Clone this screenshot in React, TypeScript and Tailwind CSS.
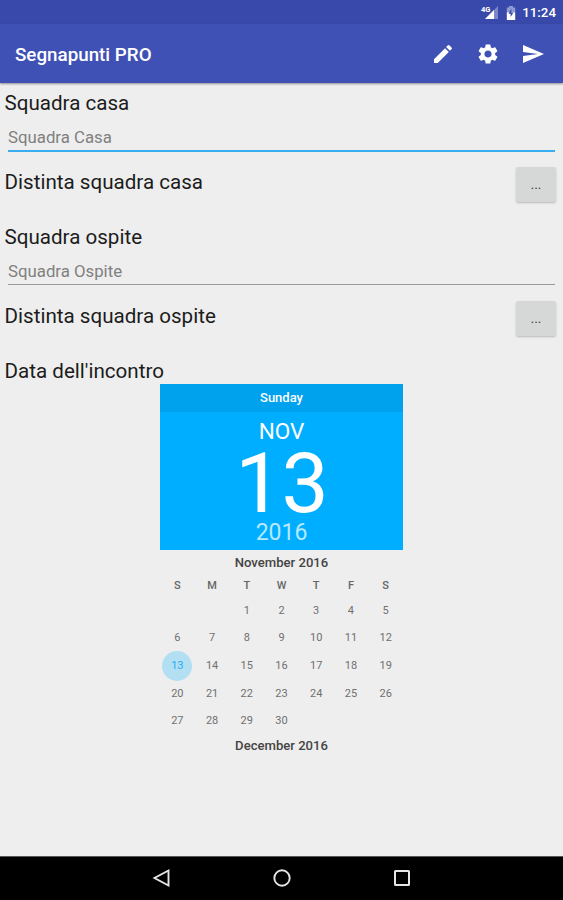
import { useState } from "react";
import { MdEdit, MdSend, MdSettings } from "react-icons/md";

type teamFieldProps = {
	label: string,
	placeholder: string,
	listLabel: string,
	active: boolean,
	onFocus: () => void,
}

const weekDays = ["Sunday", "Monday", "Tuesday", "Wednesday", "Thursday", "Friday", "Saturday"];

// november 2016 starts on a tuesday
const firstDay = 2;
const daysInMonth = 30;

function StatusBar() {
	return (
	<div className="flex h-6 items-center justify-end bg-[#3949ab] pr-[7px] text-white">
		<svg className="mt-px h-[15px] w-[18px]" viewBox="0 0 18 15">
			<path d="M17 1v13H4z" fill="#fff" fillOpacity="0.35" />
			<path d="M13 5v9H4z" fill="#fff" />
			<text x="0" y="6.6" fontSize="7.5" fontWeight="700" fill="#fff" fontFamily="Roboto, sans-serif">4G</text>
		</svg>
		<svg className="mr-1.5 ml-[7px] mt-px h-[14px] w-[10px]" viewBox="0 0 10 14">
			<path d="M3 0h4v1.5h2.2V7H.8V1.5H3z" fill="#fff" fillOpacity="0.45" />
			<path d="M.8 6.5h8.4V14H.8z" fill="#fff" />
			<path d="M5.4 2.5v4.2h2L4.6 11V7.8h-2z" fill="#3949ab" />
		</svg>
		<span className="mt-0.5 text-[13.3px] leading-none font-medium">11:24</span>
	</div>
	);
}

function Toolbar() {
	return (
	<header className="relative flex h-[59px] items-center justify-between bg-[#3f51b5] pt-0.5 pr-[18px] pl-[15px] text-white shadow-[0_1px_2px_rgba(0,0,0,0.4)]">
		<h1 className="pt-px text-[18.8px] leading-6 font-medium">Segnapunti PRO</h1>
		<div className="flex gap-[21px] pb-0.5">
			<button type="button" aria-label="Modifica"><MdEdit size={24} /></button>
			<button type="button" aria-label="Impostazioni"><MdSettings size={24} /></button>
			<button type="button" aria-label="Invia"><MdSend size={24} /></button>
		</div>
	</header>
	);
}

function TeamField({ label, placeholder, listLabel, active, onFocus }: teamFieldProps) {
	return (
	<section className="h-[134px]">
		<h2 className="pl-[4.5px] text-[20.6px] leading-[26px] text-[#1c1c1c]">{label}</h2>
		<div className={active ? "mx-2 mt-2 mb-[15px] border-b-2 border-[#38aef0]" : "mx-2 mt-2 mb-4 border-b border-[#9a9a9a]"}>
			<input
				type="text"
				placeholder={placeholder}
				onFocus={onFocus}
				className="block h-[26px] w-full bg-transparent pb-px text-[16.8px] text-[#333] outline-none placeholder:text-[#808080]"
			/>
		</div>
		<div className="flex h-[35px] justify-between pr-[7px] pl-[4.5px]">
			<h2 className="pt-0.5 text-[20.6px] leading-[26px] text-[#1c1c1c]">{listLabel}</h2>
			<button type="button" className="h-[35px] w-10 rounded-[2px] bg-[#d6d7d7] text-[14px] text-[#444] shadow-[0_1px_2px_rgba(0,0,0,0.22)]">...</button>
		</div>
	</section>
	);
}

function Calendar() {
	const [selected, setSelected] = useState(13);

	const cells: (number | null)[] = [
		...Array(firstDay).fill(null),
		...Array.from({ length: daysInMonth }, (_, i) => i + 1),
	];

	return (
	<div className="mx-auto w-[243px]">
		<div className="flex h-[166px] flex-col items-center bg-[#00aeff] text-white">
			<div className="h-7 w-full bg-[#00a2ee] text-center text-[13px] leading-[28px] font-medium">
				{weekDays[(selected + firstDay - 1) % 7]}
			</div>
			<p className="mt-1.5 text-[22.5px] leading-[26px]">NOV</p>
			<p className="pt-0.5 text-[84px] leading-[75px] tracking-[-1px]">{selected}</p>
			<p className="text-[23px] leading-[24px] text-[#b8e8ff]">2016</p>
		</div>
		<p className="h-[25px] text-center text-[13.1px] leading-[26px] font-medium text-[#444]">November 2016</p>
		<div className="grid h-[22px] grid-cols-7 text-center text-[11px] leading-[22px] font-medium text-[#666]">
			{weekDays.map((day) => <span key={day}>{day[0]}</span>)}
		</div>
		<div className="grid auto-rows-[27.7px] grid-cols-7 text-[11px] text-[#707070]">
			{cells.map((day, i) => (
				<div key={i} className="flex items-center justify-center">
					{
						day && (
							<button
								type="button"
								onClick={() => setSelected(day)}
								className={day === selected
									? "-my-1 h-[30px] w-[30px] shrink-0 rounded-full bg-[#b2dff1] text-[#27adf5]"
									: "h-6 w-6"}
							>
								{day}
							</button>
						)
					}
				</div>
			))}
		</div>
		<p className="text-center text-[13.1px] leading-[22px] font-medium text-[#444]">December 2016</p>
	</div>
	);
}

function NavigationBar() {
	return (
	<nav className="flex h-11 items-center justify-center gap-24 border-t border-[#555] bg-black pb-0.5">
		<svg className="h-6 w-6" viewBox="0 0 24 24" fill="none" stroke="#e6e6e6" strokeWidth="1.9">
			<path d="M18.5 4.5v15L4.5 12z" />
		</svg>
		<svg className="h-6 w-6" viewBox="0 0 24 24" fill="none" stroke="#e6e6e6" strokeWidth="1.9">
			<circle cx="12" cy="12" r="7.7" />
		</svg>
		<svg className="h-6 w-6" viewBox="0 0 24 24" fill="none" stroke="#e6e6e6" strokeWidth="2">
			<rect x="5" y="5" width="14" height="14" rx="0.5" />
		</svg>
	</nav>
	);
}

export default function App() {
	const [active, setActive] = useState("casa");

	return (
	<div className="flex h-screen flex-col overflow-hidden bg-[#eeeeee] font-[Roboto,sans-serif]">
		<StatusBar />
		<Toolbar />
		<main className="flex-1 pt-[7px]">
			<TeamField
				label="Squadra casa"
				placeholder="Squadra Casa"
				listLabel="Distinta squadra casa"
				active={active === "casa"}
				onFocus={() => setActive("casa")}
			/>
			<TeamField
				label="Squadra ospite"
				placeholder="Squadra Ospite"
				listLabel="Distinta squadra ospite"
				active={active === "ospite"}
				onFocus={() => setActive("ospite")}
			/>
			<h2 className="pl-[4.5px] text-[20.6px] leading-[26px] text-[#1c1c1c]">Data dell'incontro</h2>
			<Calendar />
		</main>
		<NavigationBar />
	</div>
	);
}
